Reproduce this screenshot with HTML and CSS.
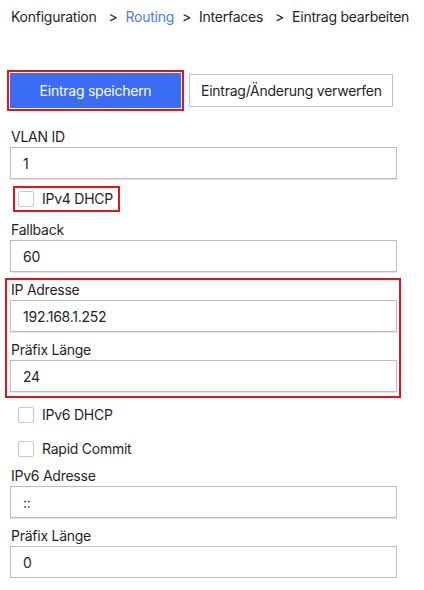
FILE: index.html
```html
<!DOCTYPE html>
<html lang="de">
<head>
<meta charset="utf-8">
<title>Eintrag bearbeiten</title>
<link rel="stylesheet" href="styles.css">
</head>
<body>
<div class="page">
  <nav class="crumbs">
    <span class="crumb spaced">Konfiguration</span><span class="sep">&gt;</span><span class="crumb link">Routing</span><span class="sep">&gt;</span><span class="crumb spaced">Interfaces</span><span class="sep">&gt;</span><span class="crumb">Eintrag bearbeiten</span>
  </nav>

  <div class="actions">
    <button class="btn btn-primary" type="button">Eintrag speichern</button>
    <button class="btn btn-secondary" type="button">Eintrag/Änderung verwerfen</button>
  </div>

  <form class="form">
    <label class="field-label first">VLAN ID</label>
    <input class="text-input" type="text" value="1">

    <div class="check-row highlight"><span class="checkbox"></span><span class="check-label">IPv4 DHCP</span></div>

    <label class="field-label">Fallback</label>
    <input class="text-input" type="text" value="60">

    <div class="group highlight-group">
      <label class="field-label top">IP Adresse</label>
      <input class="text-input" type="text" value="192.168.1.252">
      <label class="field-label">Präfix Länge</label>
      <input class="text-input" type="text" value="24">
    </div>

    <div class="check-row after-group"><span class="checkbox"></span><span class="check-label">IPv6 DHCP</span></div>
    <div class="check-row"><span class="checkbox"></span><span class="check-label">Rapid Commit</span></div>

    <label class="field-label after-check">IPv6 Adresse</label>
    <input class="text-input" type="text" value="::">
    <label class="field-label">Präfix Länge</label>
    <input class="text-input" type="text" value="0">
  </form>
</div>
</body>
</html>
```

FILE: styles.css
```css
* { box-sizing: border-box; }

html, body {
  margin: 0;
  padding: 0;
  background: #ffffff;
}

body {
  font-family: Inter, "Noto Sans", "Liberation Sans", sans-serif;
  font-size: 14px;
  line-height: 20px;
  letter-spacing: -0.25px;
  color: #1f1f1f;
}

.page {
  padding: 7px 0 0 10px;
  width: 397px;
}

.crumbs {
  display: flex;
  align-items: center;
  height: 20px;
  white-space: nowrap;
  padding-left: 1px;
}

.crumb.spaced { margin-right: 4px; }
.crumb.link { color: #4a7cf6; }
.sep { margin: 0 8px; }

.actions {
  display: flex;
  align-items: center;
  gap: 8px;
  margin-top: 46px;
}

.btn {
  font-family: inherit;
  font-size: 14px;
  line-height: 20px;
  letter-spacing: -0.25px;
  white-space: nowrap;
  cursor: pointer;
  margin: 0;
}

.btn-primary {
  width: 171px;
  height: 35px;
  border: none;
  background: #3b6cf5;
  color: #ffffff;
  outline: 2px solid #e5131c;
  outline-offset: 1px;
  padding: 0;
}

.btn-secondary {
  height: 33px;
  padding: 0 10px 0 11px;
  background: #ffffff;
  color: #1f1f1f;
  border: 1px solid #c3c3c3;
}

.form {
  display: flex;
  flex-direction: column;
  align-items: stretch;
  margin: 0;
}

.field-label {
  display: block;
  height: 20px;
  margin-top: 8px;
  padding-left: 1px;
}

.field-label.first { margin-top: 19px; }
.field-label.top { margin-top: 0; }
.field-label.after-check { margin-top: 4px; }

.text-input {
  display: block;
  width: 100%;
  height: 32px;
  margin: 0;
  padding: 0 12px;
  border: 1px solid #bdbdbd;
  border-radius: 0;
  box-shadow: 0 1px 0 #e4e4e4;
  background: #ffffff;
  font-family: inherit;
  font-size: 14px;
  letter-spacing: -0.25px;
  color: #1f1f1f;
  outline: none;
}

.check-row {
  display: flex;
  align-items: center;
  align-self: flex-start;
  gap: 8px;
  height: 26px;
  margin-top: 8px;
  margin-left: 3px;
  padding: 0 5px 0 3px;
  border: 2px solid transparent;
}

.check-row.highlight {
  border-color: #e5131c;
  margin-top: 7px;
}

.check-row.after-group { margin-top: 4px; }

.checkbox {
  display: block;
  width: 16px;
  height: 16px;
  border: 1px solid #c9c9c9;
  border-radius: 2px;
  background: #ffffff;
}

.group {
  display: flex;
  flex-direction: column;
}

.highlight-group {
  margin: 6px -4px 0 -5px;
  padding: 0 2px 4px 3px;
  border: 2px solid #e5131c;
}
```
